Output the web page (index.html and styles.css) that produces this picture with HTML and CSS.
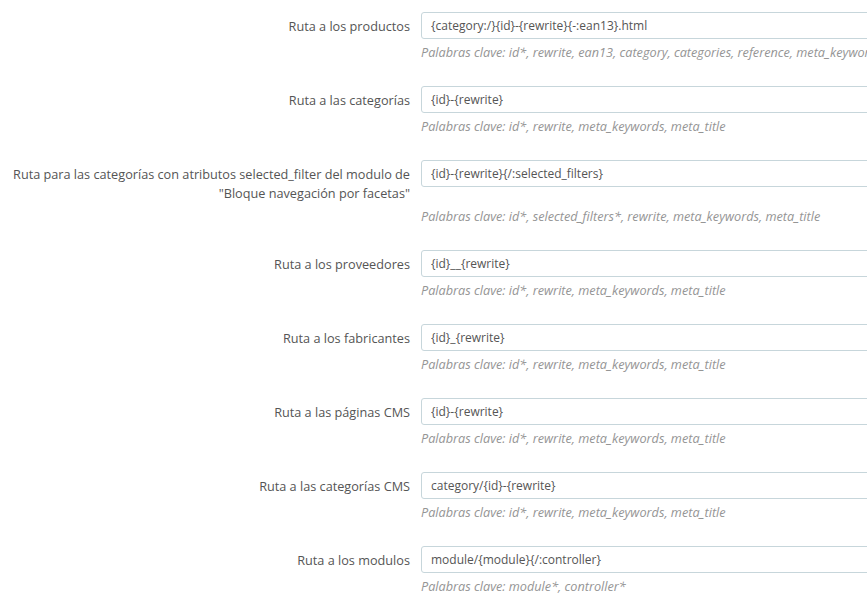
FILE: index.html
```html
<!doctype html>
<html lang="es">
  <head>
    <meta charset="UTF-8" />
    <title>Rutas</title>
    <link rel="stylesheet" href="styles.css">
  </head>
  <body>
    <form class="routes-form">
      <div class="form-group">
        <label class="control-label">Ruta a los productos</label>
        <input class="form-control" type="text" value="{category:/}{id}-{rewrite}{-:ean13}.html">
        <p class="help-block">Palabras clave: id*, rewrite, ean13, category, categories, reference, meta_keywords, meta_title, manufacturer, supplier, price, tags</p>
      </div>

      <div class="form-group">
        <label class="control-label">Ruta a las categorías</label>
        <input class="form-control" type="text" value="{id}-{rewrite}">
        <p class="help-block">Palabras clave: id*, rewrite, meta_keywords, meta_title</p>
      </div>

      <div class="form-group">
        <label class="control-label">Ruta para las categorías con atributos selected_filter del modulo de "Bloque navegación por facetas"</label>
        <input class="form-control" type="text" value="{id}-{rewrite}{/:selected_filters}">
        <p class="help-block">Palabras clave: id*, selected_filters*, rewrite, meta_keywords, meta_title</p>
      </div>

      <div class="form-group">
        <label class="control-label">Ruta a los proveedores</label>
        <input class="form-control" type="text" value="{id}__{rewrite}">
        <p class="help-block">Palabras clave: id*, rewrite, meta_keywords, meta_title</p>
      </div>

      <div class="form-group">
        <label class="control-label">Ruta a los fabricantes</label>
        <input class="form-control" type="text" value="{id}_{rewrite}">
        <p class="help-block">Palabras clave: id*, rewrite, meta_keywords, meta_title</p>
      </div>

      <div class="form-group">
        <label class="control-label">Ruta a las páginas CMS</label>
        <input class="form-control" type="text" value="{id}-{rewrite}">
        <p class="help-block">Palabras clave: id*, rewrite, meta_keywords, meta_title</p>
      </div>

      <div class="form-group">
        <label class="control-label">Ruta a las categorías CMS</label>
        <input class="form-control" type="text" value="category/{id}-{rewrite}">
        <p class="help-block">Palabras clave: id*, rewrite, meta_keywords, meta_title</p>
      </div>

      <div class="form-group">
        <label class="control-label">Ruta a los modulos</label>
        <input class="form-control" type="text" value="module/{module}{/:controller}">
        <p class="help-block">Palabras clave: module*, controller*</p>
      </div>
    </form>
  </body>
</html>
```

FILE: styles.css
```css
* {
  margin: 0;
  padding: 0;
  box-sizing: border-box;
}

html,
body {
  overflow: hidden;
}

body {
  font-family: "Open Sans", "Liberation Sans", sans-serif;
  font-size: 12.7px;
  line-height: 19px;
  color: #555;
  background: #fff;
  padding-top: 12px;
}

.routes-form {
  width: 1000px;
}

.form-group {
  display: grid;
  grid-template-columns: 410px 500px;
  column-gap: 11px;
  align-items: start;
  margin-bottom: 25px;
}

.control-label {
  grid-column: 1;
  grid-row: 1;
  text-align: right;
  padding-top: 5px;
  color: #555;
}

.form-control {
  grid-column: 2;
  grid-row: 1;
  height: 27px;
  width: 100%;
  padding: 0 9px;
  font-family: inherit;
  font-size: 12px;
  color: #555;
  background: #fff;
  border: 1px solid #c7d6db;
  border-radius: 3px;
  outline: none;
}

.help-block {
  grid-column: 2;
  grid-row: 2;
  margin-top: 4px;
  line-height: 18px;
  font-style: italic;
  color: #959595;
  white-space: nowrap;
}
```
